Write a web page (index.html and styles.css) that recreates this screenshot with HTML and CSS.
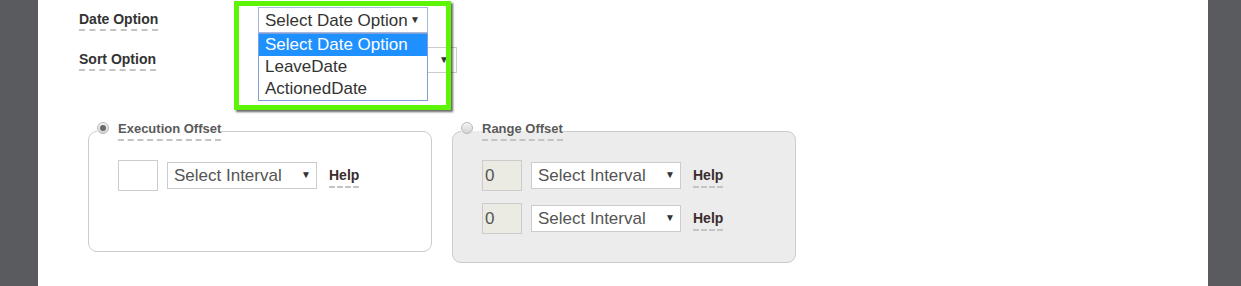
FILE: index.html
```html
<!DOCTYPE html>
<html lang="en">
  <head>
    <meta charset="UTF-8" />
    <meta name="viewport" content="width=device-width, initial-scale=1.0" />
    <title>Report Schedule</title>
    <link rel="stylesheet" href="styles.css">
  </head>
  <body>
    <div class="side"></div>
    <main class="page">
      <div class="options">
        <span class="opt-label">Date Option</span>
        <div class="date-cell">
          <div class="select-wrap date-select focused">
            <select>
              <option>Select Date Option</option>
              <option>LeaveDate</option>
              <option>ActionedDate</option>
            </select>
          </div>
          <ul class="dropdown">
            <li class="active">Select Date Option</li>
            <li>LeaveDate</li>
            <li>ActionedDate</li>
          </ul>
        </div>

        <span class="opt-label">Sort Option</span>
        <div class="select-wrap sort-select">
          <select>
            <option>Select Sort Option</option>
          </select>
        </div>
      </div>

      <div class="offsets">
        <fieldset class="offset">
          <legend>
            <input type="radio" name="offset" checked>
            <span class="legend-text">Execution Offset</span>
          </legend>
          <div class="rows">
            <div class="row">
              <input type="text" class="num">
              <div class="select-wrap interval">
                <select><option>Select Interval</option></select>
              </div>
              <a class="help">Help</a>
            </div>
          </div>
        </fieldset>

        <fieldset class="offset disabled">
          <legend>
            <input type="radio" name="offset">
            <span class="legend-text">Range Offset</span>
          </legend>
          <div class="rows">
            <div class="row">
              <input type="text" class="num" value="0" disabled>
              <div class="select-wrap interval">
                <select disabled><option>Select Interval</option></select>
              </div>
              <a class="help">Help</a>
            </div>
            <div class="row">
              <input type="text" class="num" value="0" disabled>
              <div class="select-wrap interval">
                <select disabled><option>Select Interval</option></select>
              </div>
              <a class="help">Help</a>
            </div>
          </div>
        </fieldset>
      </div>

      <div class="highlight"></div>
    </main>
    <div class="side"></div>
  </body>
</html>
```

FILE: styles.css
```css
body {
  display: flex;
  margin: 0;
  height: 286px;
  overflow: hidden;
  background-color: #5a5b5f;
  font-family: "Liberation Sans", Arial, sans-serif;
  color: #333;
}
.side {
  width: 38px;
  flex-shrink: 0;
  background-color: #5a5b5f;
}
.side:last-child {
  width: 33px;
}
.page {
  position: relative;
  flex: 1;
  background-color: white;
  padding: 7px 0 0 41px;
}
.options {
  display: grid;
  grid-template-columns: 179px auto;
  row-gap: 14px;
  align-items: start;
}
.opt-label {
  justify-self: start;
  margin-top: 3px;
  font-size: 14px;
  font-weight: bold;
  line-height: 18px;
  padding-bottom: 1px;
  border-bottom: 2px dashed #c4c4c4;
}
.date-cell {
  position: relative;
  z-index: 2;
  width: 170px;
}
.select-wrap {
  position: relative;
  display: inline-block;
}
.select-wrap::after {
  content: "\25BC";
  position: absolute;
  right: 8px;
  top: 7px;
  font-size: 10px;
  color: #333;
  pointer-events: none;
}
select {
  appearance: none;
  -webkit-appearance: none;
  width: 100%;
  height: 26px;
  margin: 0;
  padding: 0 6px;
  border: 1px solid #ccc;
  border-radius: 0;
  background-color: white;
  font-family: "Liberation Sans", Arial, sans-serif;
  font-size: 17px;
  color: #444;
  outline: none;
}
.date-select {
  width: 170px;
}
.focused select {
  border-color: #a3b8dc;
  color: #333;
}
.sort-select {
  width: 199px;
}
.dropdown {
  position: absolute;
  top: 26px;
  left: 0;
  width: 170px;
  box-sizing: border-box;
  margin: 0;
  padding: 0;
  list-style: none;
  border: 1px solid #7f9fd6;
  background-color: white;
}
.dropdown li {
  height: 22px;
  line-height: 22px;
  padding: 0 6px;
  font-size: 17px;
  color: #333;
}
.dropdown li.active {
  background-color: #1e90ff;
  color: white;
}
.offsets {
  display: flex;
  align-items: flex-start;
  gap: 20px;
  margin: 48px 0 0 9px;
}
.offset {
  width: 344px;
  box-sizing: border-box;
  margin: 0;
  padding: 19px 29px 28px;
  border: 1px solid #ccc;
  border-radius: 9px;
}
.offset.disabled {
  background-color: #ececec;
}
.offset legend {
  display: flex;
  align-items: center;
  gap: 9px;
  margin-left: -21px;
  padding: 0;
}
input[type="radio"] {
  appearance: none;
  -webkit-appearance: none;
  width: 12px;
  height: 12px;
  margin: 0 0 6px;
  border: 1px solid #b8b8b8;
  border-radius: 50%;
  background: linear-gradient(#f4f4f4, #d4d4d4);
  box-sizing: border-box;
  position: relative;
}
input[type="radio"]:checked::after {
  content: "";
  position: absolute;
  left: 2px;
  top: 2px;
  width: 6px;
  height: 6px;
  border-radius: 50%;
  background-color: #6a6a6a;
}
.legend-text {
  font-size: 13px;
  font-weight: bold;
  color: #5a5a5a;
  line-height: 16px;
  padding-bottom: 2px;
  border-bottom: 2px dashed #c4c4c4;
}
.rows {
  display: flex;
  flex-direction: column;
  gap: 12px;
  min-height: 63px;
}
.row {
  display: flex;
  align-items: center;
}
.num {
  width: 40px;
  height: 31px;
  box-sizing: border-box;
  margin: 0 9px 0 0;
  padding: 0 2px;
  border: 1px solid #ccc;
  background-color: white;
  font-family: "Liberation Sans", Arial, sans-serif;
  font-size: 17px;
  color: #555;
}
.num:disabled {
  background-color: #ebebe4;
}
.interval {
  width: 150px;
  margin-right: 12px;
}
.interval select {
  height: 27px;
  color: #555;
}
.interval select:disabled {
  background-color: white;
  opacity: 1;
}
.interval::after {
  right: 6px;
}
.help {
  margin-top: 3px;
  font-size: 14px;
  font-weight: bold;
  color: #3a2c2c;
  line-height: 17px;
  padding-bottom: 2px;
  border-bottom: 2px dashed #c4c4c4;
  cursor: pointer;
}
.highlight {
  position: absolute;
  left: 196px;
  top: 1px;
  width: 207px;
  height: 99px;
  border: 5px solid #5ef406;
  box-shadow: 2px 2px 2px rgba(0, 0, 0, 0.6);
  pointer-events: none;
  z-index: 3;
}
```
